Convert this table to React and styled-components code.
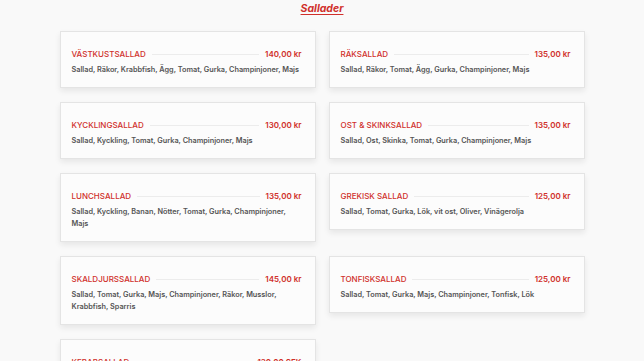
import React from "react";
import styled, { createGlobalStyle } from "styled-components";

const GlobalStyle = createGlobalStyle`
  html, body {
    margin: 0;
    padding: 0;
    background: #f9f9f9;
    font-family: Inter, "Liberation Sans", sans-serif;
  }
`;

const Page = styled.main`
  min-height: 100vh;
  padding: 3px 0 40px;
  box-sizing: border-box;
`;

const Heading = styled.h2`
  margin: 0 0 16px;
  text-align: center;
  font-size: 10.5px;
  line-height: 12px;
  font-weight: 700;
  font-style: italic;
  color: #d0302b;
  text-decoration: underline;
  text-underline-offset: 2px;
  text-decoration-thickness: 1px;
`;

const Grid = styled.section`
  display: grid;
  grid-template-columns: 256px 256px;
  column-gap: 13px;
  row-gap: 14px;
  justify-content: center;
  align-items: start;
`;

const Card = styled.article`
  background: #fcfcfc;
  border: 1px solid #e4e4e4;
  box-shadow: 0 3px 6px rgba(0, 0, 0, 0.08);
  padding: 16px 13px 11px 11px;
`;

const TitleRow = styled.div`
  display: flex;
  align-items: center;
  gap: 6px;
  line-height: 12px;
  font-size: 8px;
  color: #d0302b;
  margin-bottom: 4px;
`;

const Name = styled.span`
  font-weight: 500;
  text-transform: uppercase;
  white-space: nowrap;
`;

const Rule = styled.span`
  flex: 1;
  height: 1px;
  background: #ececec;
  margin-top: 1px;
`;

const Price = styled.span`
  font-weight: 600;
  white-space: nowrap;
`;

const Desc = styled.p`
  margin: 0;
  font-size: 7.3px;
  line-height: 12px;
  font-weight: 600;
  color: #555;
`;

const salads = [
  { name: "Västkustsallad", price: "140,00 kr", desc: "Sallad, Räkor, Krabbfish, Ägg, Tomat, Gurka, Champinjoner, Majs" },
  { name: "Räksallad", price: "135,00 kr", desc: "Sallad, Räkor, Tomat, Ägg, Gurka, Champinjoner, Majs" },
  { name: "Kycklingsallad", price: "130,00 kr", desc: "Sallad, Kyckling, Tomat, Gurka, Champinjoner, Majs" },
  { name: "Ost & Skinksallad", price: "135,00 kr", desc: "Sallad, Ost, Skinka, Tomat, Gurka, Champinjoner, Majs" },
  { name: "Lunchsallad", price: "135,00 kr", desc: "Sallad, Kyckling, Banan, Nötter, Tomat, Gurka, Champinjoner, Majs" },
  { name: "Grekisk sallad", price: "125,00 kr", desc: "Sallad, Tomat, Gurka, Lök, vit ost, Oliver, Vinägerolja" },
  { name: "Skaldjurssallad", price: "145,00 kr", desc: "Sallad, Tomat, Gurka, Majs, Champinjoner, Räkor, Musslor, Krabbfish, Sparris" },
  { name: "Tonfisksallad", price: "125,00 kr", desc: "Sallad, Tomat, Gurka, Majs, Champinjoner, Tonfisk, Lök" },
  { name: "Kebabsallad", price: "130,00 SEK", desc: "Sallad, Kebabkött, Tomat, Gurka, Lök, Feferoni, Sås" },
];

export default function App() {
  return (
    <>
      <GlobalStyle />
      <Page>
        <Heading>Sallader</Heading>
        <Grid>
          {salads.map((s) => (
            <Card key={s.name}>
              <TitleRow>
                <Name>{s.name}</Name>
                <Rule />
                <Price>{s.price}</Price>
              </TitleRow>
              <Desc>{s.desc}</Desc>
            </Card>
          ))}
        </Grid>
      </Page>
    </>
  );
}
